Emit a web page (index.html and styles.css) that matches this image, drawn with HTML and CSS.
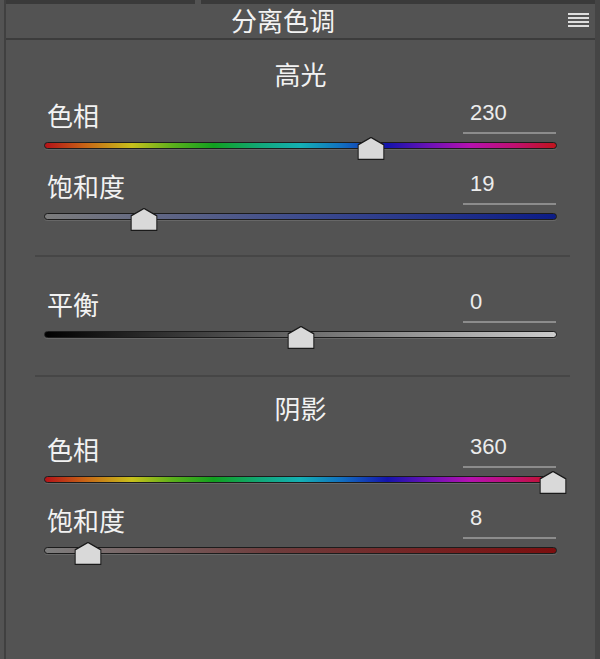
FILE: index.html
```html
<!DOCTYPE html>
<html lang="zh-CN">
<head>
<meta charset="utf-8">
<title>分离色调</title>
<link rel="stylesheet" href="styles.css">
</head>
<body>
<div class="frame">
  <div class="tabs"><div class="tab tab-a"></div><div class="tab tab-b"></div></div>
  <div class="header">
    <div class="title">分离色调</div>
    <div class="menu"><span></span><span></span><span></span><span></span></div>
  </div>

  <div class="group group-hl">
    <div class="heading">高光</div>
    <div class="slider">
      <div class="head"><span class="label">色相</span><span class="value">230</span></div>
      <div class="rail">
        <div class="track hue"></div>
        <div class="thumbs"><svg class="thumb" style="left:63.9%" viewBox="0 0 27 23" width="27" height="23"><polygon points="13.5,0.5 26.5,8 26.5,22.5 0.5,22.5 0.5,8"/></svg></div>
      </div>
    </div>
    <div class="slider">
      <div class="head"><span class="label">饱和度</span><span class="value">19</span></div>
      <div class="rail">
        <div class="track sat-hl"></div>
        <div class="thumbs"><svg class="thumb" style="left:19%" viewBox="0 0 27 23" width="27" height="23"><polygon points="13.5,0.5 26.5,8 26.5,22.5 0.5,22.5 0.5,8"/></svg></div>
      </div>
    </div>
  </div>

  <div class="sep sep-a"></div>

  <div class="group group-bal">
    <div class="slider">
      <div class="head"><span class="label">平衡</span><span class="value">0</span></div>
      <div class="rail">
        <div class="track balance"></div>
        <div class="thumbs"><svg class="thumb" style="left:50%" viewBox="0 0 27 23" width="27" height="23"><polygon points="13.5,0.5 26.5,8 26.5,22.5 0.5,22.5 0.5,8"/></svg></div>
      </div>
    </div>
  </div>

  <div class="sep sep-b"></div>

  <div class="group group-sh">
    <div class="heading">阴影</div>
    <div class="slider">
      <div class="head"><span class="label">色相</span><span class="value">360</span></div>
      <div class="rail">
        <div class="track hue"></div>
        <div class="thumbs"><svg class="thumb" style="left:100%" viewBox="0 0 27 23" width="27" height="23"><polygon points="13.5,0.5 26.5,8 26.5,22.5 0.5,22.5 0.5,8"/></svg></div>
      </div>
    </div>
    <div class="slider">
      <div class="head"><span class="label">饱和度</span><span class="value">8</span></div>
      <div class="rail">
        <div class="track sat-sh"></div>
        <div class="thumbs"><svg class="thumb" style="left:8%" viewBox="0 0 27 23" width="27" height="23"><polygon points="13.5,0.5 26.5,8 26.5,22.5 0.5,22.5 0.5,8"/></svg></div>
      </div>
    </div>
  </div>
</div>
</body>
</html>
```

FILE: styles.css
```css
* { box-sizing: border-box; }
html, body { margin: 0; padding: 0; }
body {
  background: #535353;
  width: 600px;
  height: 659px;
  overflow: hidden;
  font-family: "Noto Sans CJK SC", "Noto Sans", sans-serif;
  color: #f0f0f0;
}
.frame {
  margin-left: 4px;
  width: 596px;
  height: 659px;
  border-left: 2px solid #404040;
  border-right: 5px solid #454545;
  background: #535353;
}
.tabs {
  display: flex;
  height: 4px;
}
.tab { background: #3a3a3a; height: 4px; }
.tab-a { width: 189px; }
.tab-b { flex: 1; margin-left: 6px; }

.header {
  display: flex;
  height: 36px;
  border-bottom: 2px solid #3c3c3c;
}
.title {
  flex: 1;
  text-align: center;
  font-size: 26px;
  line-height: 32px;
  color: #f2f2f2;
}
.menu {
  width: 35px;
  padding-left: 8px;
  padding-top: 9px;
  display: flex;
  flex-direction: column;
  gap: 2px;
}
.menu span {
  display: block;
  width: 21px;
  height: 2px;
  background: #dedede;
}

.group { display: flow-root; }
.group-hl { padding-top: 17px; }
.group-bal { padding-top: 30px; }
.group-sh { padding-top: 14px; }

.heading {
  height: 36px;
  line-height: 34px;
  text-align: center;
  font-size: 26px;
  color: #f2f2f2;
}
.group-hl .heading { margin-bottom: 5px; }
.group-sh .heading { margin-bottom: 5px; }

.slider {
  margin: 0 38px 11px 38px;
}
.head {
  display: flex;
  justify-content: space-between;
  height: 36px;
}
.label {
  padding-left: 3px;
  font-size: 26px;
  line-height: 34px;
  color: #f2f2f2;
}
.value {
  width: 93px;
  height: 36px;
  margin-right: 1px;
  border-bottom: 2px solid #8c8c8c;
  padding-left: 7px;
  font-family: "Liberation Sans", Arial, sans-serif;
  font-size: 22px;
  line-height: 30px;
  color: #ececec;
}
.rail {
  position: relative;
  height: 24px;
  padding-top: 8px;
}
.track {
  height: 7px;
  border: 1px solid #1c1c1c;
  border-radius: 4px;
  box-shadow: 0 1px 0 rgba(255, 255, 255, 0.12);
}
.hue {
  background: linear-gradient(to right,
    #b41218 0%, #c86616 8%, #c8c01c 17%, #5cb01c 25%, #12a020 33%,
    #12a878 42%, #14b0b4 50%, #1270c0 58%, #1414ac 67%, #6a12b6 75%,
    #b412b0 83%, #c01070 92%, #c0141c 100%);
}
.sat-hl { background: linear-gradient(to right, #7c7c7c 0%, #3e4c8e 50%, #0c1c86 100%); }
.balance { background: linear-gradient(to right, #000000 0%, #6a6a6a 50%, #cccccc 100%); }
.sat-sh { background: linear-gradient(to right, #7e7e7e 0%, #6e3c3c 45%, #7c0e0e 100%); }

.thumbs {
  position: absolute;
  top: 3px;
  left: 4px;
  right: 4px;
  height: 23px;
}
.thumb {
  position: absolute;
  top: 0;
  transform: translateX(-50%);
  display: block;
}
.thumb polygon {
  fill: #d9d9d9;
  stroke: #1a1a1a;
  stroke-width: 1.4;
}

.sep {
  height: 2px;
  background: #464646;
  margin-left: 29px;
  margin-right: 25px;
}
.sep-a { margin-top: 15px; }
.sep-b { margin-top: 17px; }
```
